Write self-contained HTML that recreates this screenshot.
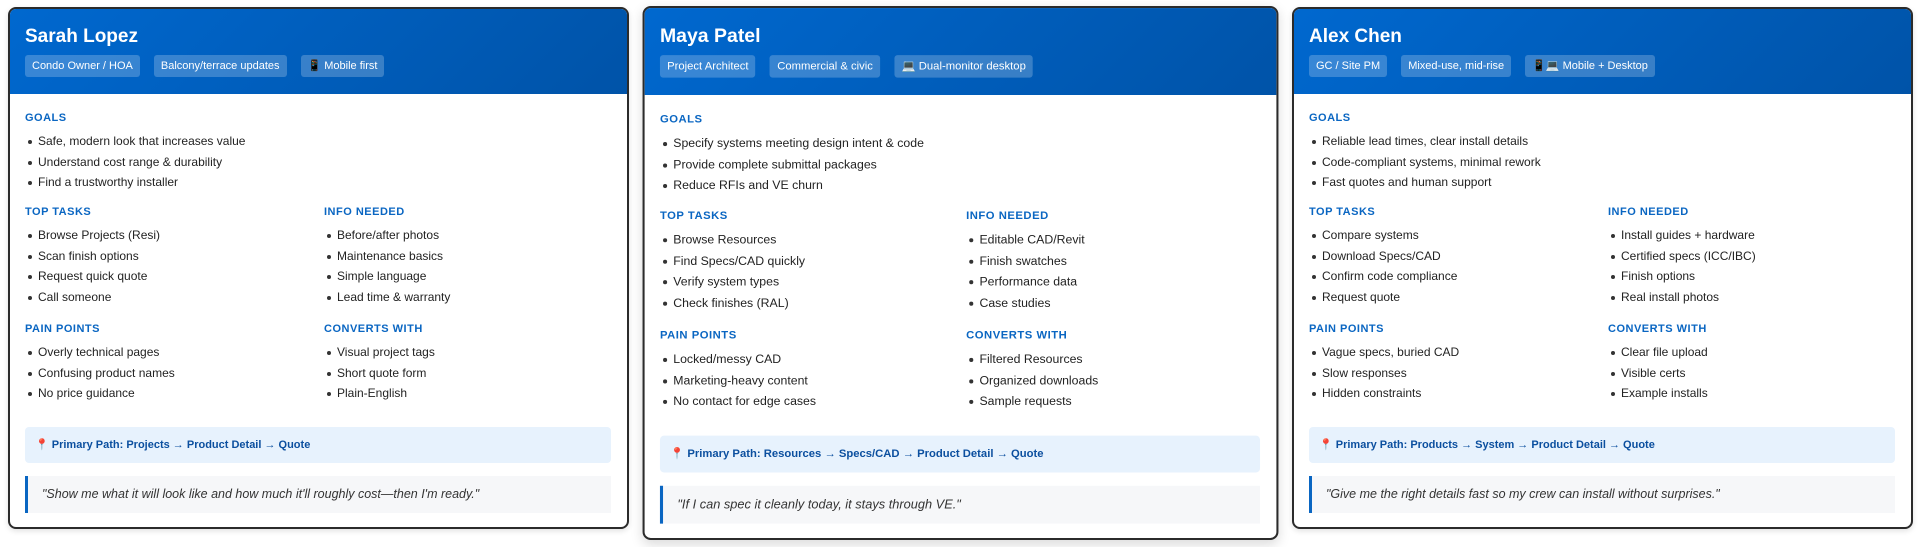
<!DOCTYPE html>
<html><head><meta charset="utf-8"><style>
*{box-sizing:border-box;margin:0;padding:0}
body{width:1920px;height:547px;background:#fff;font-family:"Liberation Sans","Noto Sans CJK JP",sans-serif;position:relative;overflow:hidden;color:#222}
.card{position:absolute;width:621px;height:522px;border:2px solid #2b2b2b;border-radius:8px;overflow:hidden;background:#fff;box-shadow:0 2px 6px rgba(0,0,0,.12)}
.hd{position:absolute;left:0;top:0;right:0;height:85px;background:linear-gradient(135deg,#0068cf,#0053a8)}
.hd h2{position:absolute;left:15px;top:17px;font-size:19px;line-height:22px;color:#fff;font-weight:bold}
.tags{position:absolute;left:15px;top:46px;display:flex;gap:14px}
.tag{height:22px;line-height:22px;padding:0 7px;font-size:11px;color:#fff;background:rgba(255,255,255,.22);border-radius:3px;white-space:nowrap}
.h{position:absolute;font-size:11px;line-height:14px;font-weight:bold;color:#0a66c2;letter-spacing:.5px}
ul{position:absolute;list-style:none;font-size:12px;line-height:20.5px;color:#222}
li{position:relative;padding-left:13px;white-space:nowrap}
li:before{content:"";position:absolute;left:3px;top:9px;width:4px;height:4px;border-radius:50%;background:#333}
.pp{position:absolute;left:15px;top:418px;width:586px;height:36px;background:#e7f2fd;border-radius:4px;font-size:11px;font-weight:bold;color:#0b4f9f;line-height:36px;padding-left:10px;white-space:nowrap}
.q{position:absolute;left:15px;top:467px;width:586px;height:37px;background:#f6f7f9;border-left:3px solid #0a66c2;font-size:12.5px;font-style:italic;color:#333;line-height:37px;padding-left:14px;white-space:nowrap}
.c1{left:15px}.c2{left:314px}
</style></head><body>

<div class="card" style="left:8px;top:7px">
<div class="hd"><h2>Sarah Lopez</h2><div class="tags"><span class="tag">Condo Owner / HOA</span><span class="tag">Balcony/terrace updates</span><span class="tag">📱 Mobile first</span></div></div>
<div class="h c1" style="top:102px">GOALS</div>
<ul class="c1" style="top:122px"><li>Safe, modern look that increases value</li><li>Understand cost range &amp; durability</li><li>Find a trustworthy installer</li></ul>
<div class="h c1" style="top:196px">TOP TASKS</div>
<ul class="c1" style="top:216px"><li>Browse Projects (Resi)</li><li>Scan finish options</li><li>Request quick quote</li><li>Call someone</li></ul>
<div class="h c2" style="top:196px">INFO NEEDED</div>
<ul class="c2" style="top:216px"><li>Before/after photos</li><li>Maintenance basics</li><li>Simple language</li><li>Lead time &amp; warranty</li></ul>
<div class="h c1" style="top:313px">PAIN POINTS</div>
<ul class="c1" style="top:333px"><li>Overly technical pages</li><li>Confusing product names</li><li>No price guidance</li></ul>
<div class="h c2" style="top:313px">CONVERTS WITH</div>
<ul class="c2" style="top:333px"><li>Visual project tags</li><li>Short quote form</li><li>Plain-English</li></ul>
<div class="pp">📍 Primary Path: Projects → Product Detail → Quote</div>
<div class="q">"Show me what it will look like and how much it'll roughly cost—then I'm ready."</div>
</div>

<div class="card" style="left:650px;top:12px;transform:scale(1.024,1.023);transform-origin:50% 50%;box-shadow:0 4px 12px rgba(0,0,0,.15)">
<div class="hd"><h2>Maya Patel</h2><div class="tags"><span class="tag">Project Architect</span><span class="tag">Commercial &amp; civic</span><span class="tag">💻 Dual-monitor desktop</span></div></div>
<div class="h c1" style="top:102px">GOALS</div>
<ul class="c1" style="top:122px"><li>Specify systems meeting design intent &amp; code</li><li>Provide complete submittal packages</li><li>Reduce RFIs and VE churn</li></ul>
<div class="h c1" style="top:196px">TOP TASKS</div>
<ul class="c1" style="top:216px"><li>Browse Resources</li><li>Find Specs/CAD quickly</li><li>Verify system types</li><li>Check finishes (RAL)</li></ul>
<div class="h c2" style="top:196px">INFO NEEDED</div>
<ul class="c2" style="top:216px"><li>Editable CAD/Revit</li><li>Finish swatches</li><li>Performance data</li><li>Case studies</li></ul>
<div class="h c1" style="top:313px">PAIN POINTS</div>
<ul class="c1" style="top:333px"><li>Locked/messy CAD</li><li>Marketing-heavy content</li><li>No contact for edge cases</li></ul>
<div class="h c2" style="top:313px">CONVERTS WITH</div>
<ul class="c2" style="top:333px"><li>Filtered Resources</li><li>Organized downloads</li><li>Sample requests</li></ul>
<div class="pp">📍 Primary Path: Resources → Specs/CAD → Product Detail → Quote</div>
<div class="q">"If I can spec it cleanly today, it stays through VE."</div>
</div>

<div class="card" style="left:1292px;top:7px">
<div class="hd"><h2>Alex Chen</h2><div class="tags"><span class="tag">GC / Site PM</span><span class="tag">Mixed-use, mid-rise</span><span class="tag">📱💻 Mobile + Desktop</span></div></div>
<div class="h c1" style="top:102px">GOALS</div>
<ul class="c1" style="top:122px"><li>Reliable lead times, clear install details</li><li>Code-compliant systems, minimal rework</li><li>Fast quotes and human support</li></ul>
<div class="h c1" style="top:196px">TOP TASKS</div>
<ul class="c1" style="top:216px"><li>Compare systems</li><li>Download Specs/CAD</li><li>Confirm code compliance</li><li>Request quote</li></ul>
<div class="h c2" style="top:196px">INFO NEEDED</div>
<ul class="c2" style="top:216px"><li>Install guides + hardware</li><li>Certified specs (ICC/IBC)</li><li>Finish options</li><li>Real install photos</li></ul>
<div class="h c1" style="top:313px">PAIN POINTS</div>
<ul class="c1" style="top:333px"><li>Vague specs, buried CAD</li><li>Slow responses</li><li>Hidden constraints</li></ul>
<div class="h c2" style="top:313px">CONVERTS WITH</div>
<ul class="c2" style="top:333px"><li>Clear file upload</li><li>Visible certs</li><li>Example installs</li></ul>
<div class="pp">📍 Primary Path: Products → System → Product Detail → Quote</div>
<div class="q">"Give me the right details fast so my crew can install without surprises."</div>
</div>

</body></html>
